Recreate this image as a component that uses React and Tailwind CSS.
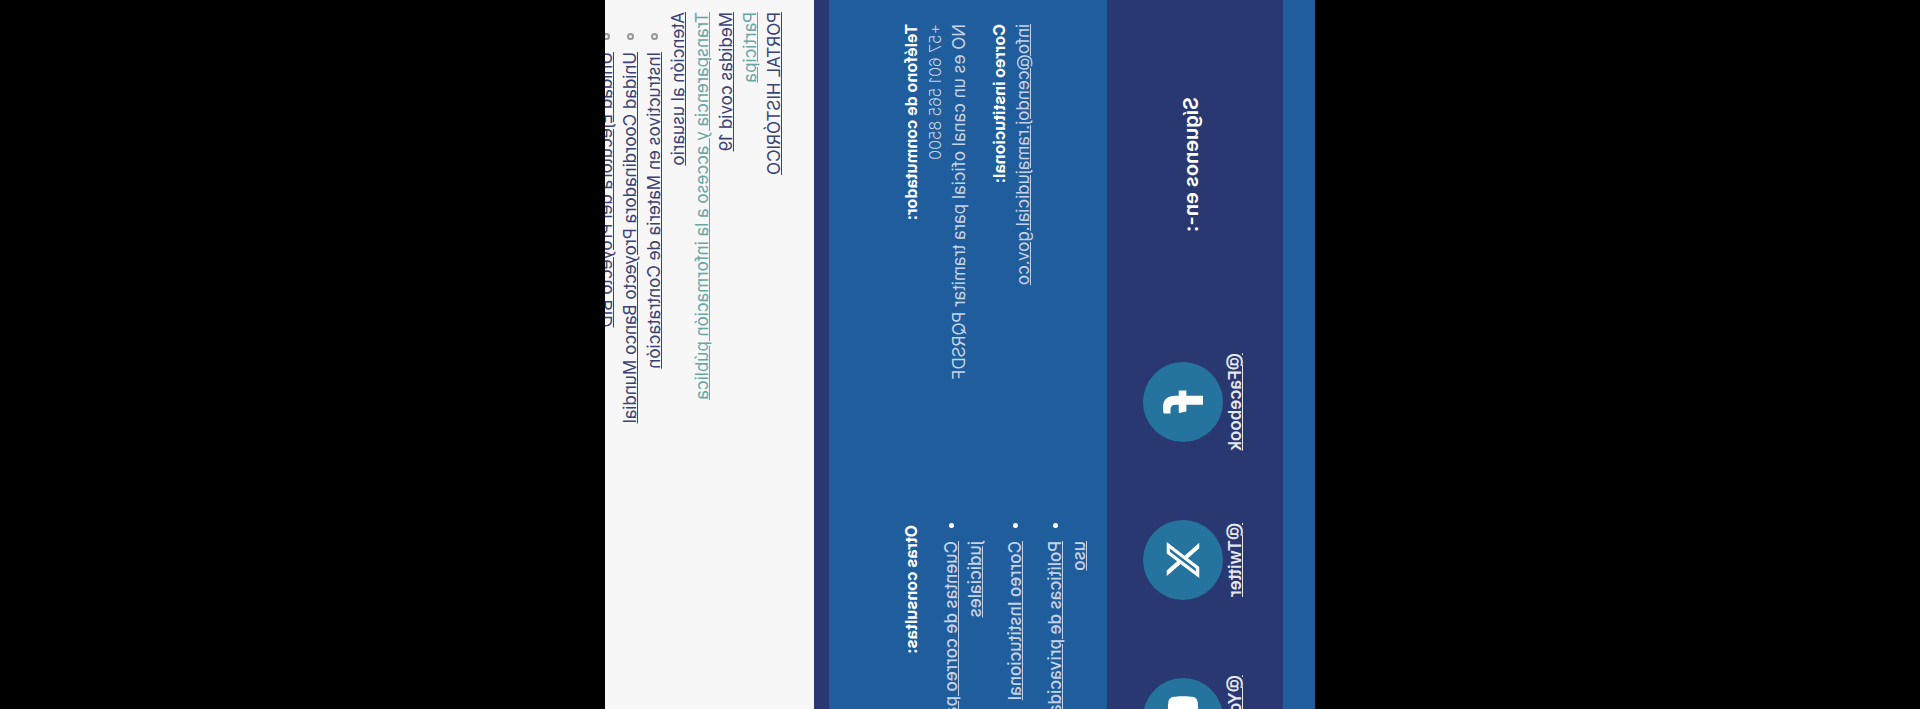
import { FaFacebookF, FaXTwitter, FaYoutube } from "react-icons/fa6";

const menuTop = [
  "Unidad Ejecutora del Proyecto BID",
  "Unidad Coordinadora Proyecto Banco Mundial",
  "Instructivos en Materia de Contratación",
];

const menuLinks = [
  { label: "Atención al usuario", color: "text-[#3b4274]" },
  { label: "Transparencia y acceso a la información pública", color: "text-[#6aa5a5]" },
  { label: "Medidas covid 19", color: "text-[#3b4274]" },
  { label: "Participa", color: "text-[#6aa5a5]" },
  { label: "PORTAL HISTÓRICO", color: "text-[#3b4274]" },
];

const otherLinks = [
  "Cuentas de correo para notificaciones judiciales",
  "Correo Institucional",
  "Políticas de privacidad y condiciones de uso",
];

const networks = [
  { label: "@Facebook", Icon: FaFacebookF, size: 40 },
  { label: "@Twitter", Icon: FaXTwitter, size: 40 },
  { label: "@Youtube", Icon: FaYoutube, size: 46 },
];

function SiteMap() {
  return (
    <nav className="flex h-[209px] shrink-0 flex-col justify-end overflow-hidden bg-[#f7f7f7] pb-7 pl-3 text-[17px] leading-6">
      <ul className="pl-10">
        {menuTop.map((label) => (
          <li key={label} className="relative text-[#3b4274]">
            <span className="absolute top-[9px] -left-[19px] size-[7px] rounded-full border-2 border-[#999]" />
            <a href="#" className="whitespace-nowrap underline">{label}</a>
          </li>
        ))}
      </ul>
      <ul>
        {menuLinks.map(({ label, color }) => (
          <li key={label} className={color}>
            <a href="#" className="whitespace-nowrap underline">{label}</a>
          </li>
        ))}
      </ul>
    </nav>
  );
}

function Contact() {
  return (
    <section className="flex h-[278px] shrink-0 gap-5 bg-[#205d9d] pt-[70px] pl-6 text-[17px] leading-6 text-[#c5d3e6]">
      <div className="flex w-[481px] shrink-0 flex-col gap-4">
        <div>
          <h2 className="text-base leading-6 font-bold text-white">Teléfono de conmutador:</h2>
          <p className="text-base leading-6 font-light">+57 601 565 8500</p>
          <p>NO es un canal oficial para tramitar PQRSDF</p>
        </div>
        <div>
          <h2 className="text-base leading-6 font-bold text-white">Correo institucional:</h2>
          <a href="#" className="underline">info@cendoj.ramajudicial.gov.co</a>
        </div>
      </div>
      <div className="flex w-[360px] shrink-0 flex-col gap-4">
        <h2 className="text-base leading-6 font-bold text-white">Otras consultas:</h2>
        <ul className="flex flex-col gap-4 pl-4 font-medium">
          {otherLinks.map((label) => (
            <li key={label} className="relative">
              <span className="absolute top-[10px] -left-[18px] size-[5px] rounded-full bg-white" />
              <a href="#" className="underline">{label}</a>
            </li>
          ))}
        </ul>
      </div>
    </section>
  );
}

function Social() {
  return (
    <section className="flex h-[176px] shrink-0 items-center bg-[#293870] pl-[97px] text-white">
      <h2 className="w-[226px] shrink-0 pb-2 text-xl font-semibold">Síguenos en-:</h2>
      {networks.map(({ label, Icon, size }) => (
        <a key={label} href="#" className="flex w-[158px] shrink-0 flex-col items-center text-[#e6e8f0]">
          <span className="flex size-20 items-center justify-center rounded-full bg-[#24749f] text-white">
            <Icon size={size} />
          </span>
          <span className="text-[17px] leading-6 font-semibold underline">{label}</span>
        </a>
      ))}
    </section>
  );
}

export default function App() {
  return (
    <div className="h-screen w-full overflow-hidden bg-black">
      <div className="flex h-[100vw] w-[100vh] origin-top-left [transform:matrix(0,1,1,0,0,0)] flex-col justify-center overflow-hidden bg-black font-['Inter',sans-serif]">
        <SiteMap />
        <div className="h-[15px] shrink-0 bg-[#293870]" />
        <Contact />
        <Social />
        <div className="h-8 shrink-0 bg-[#205d9d]" />
      </div>
    </div>
  );
}
